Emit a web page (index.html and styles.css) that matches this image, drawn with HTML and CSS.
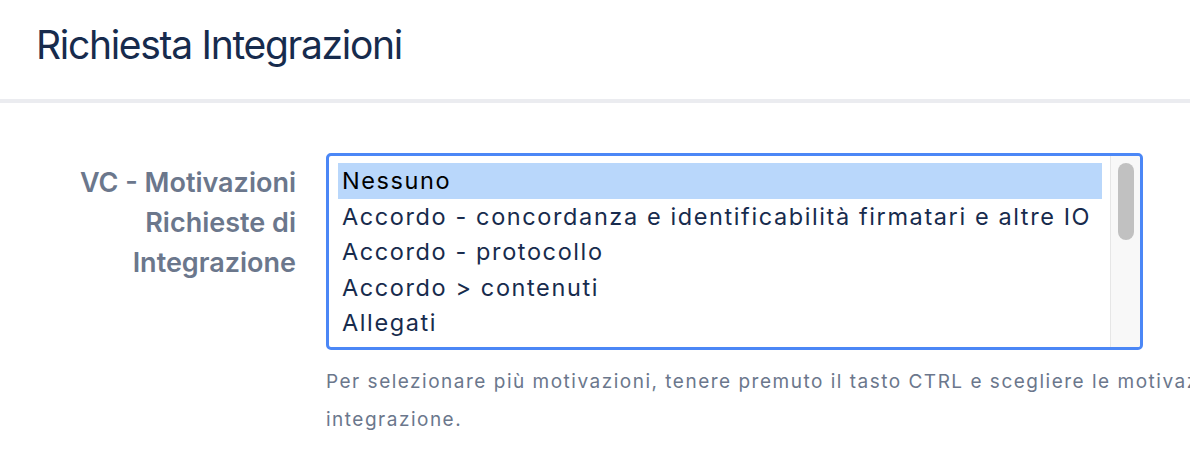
FILE: index.html
```html
<!DOCTYPE html>
<html lang="it">
<head>
<meta charset="utf-8">
<title>Richiesta Integrazioni</title>
<link rel="stylesheet" href="styles.css">
</head>
<body>
<div class="page">
  <header class="header">
    <h1 class="title">Richiesta Integrazioni</h1>
  </header>
  <div class="form">
    <div class="row">
      <label class="label">VC - Motivazioni Richieste di Integrazione</label>
      <div class="field">
        <div class="listbox" role="listbox" aria-multiselectable="true">
          <div class="options">
            <div class="option selected">Nessuno</div>
            <div class="option">Accordo - concordanza e identificabilità firmatari e altre IO</div>
            <div class="option">Accordo - protocollo</div>
            <div class="option">Accordo &gt; contenuti</div>
            <div class="option">Allegati</div>
            <div class="option">Anagrafica - dati di identificazione</div>
          </div>
          <div class="scrollbar"><div class="thumb"></div></div>
        </div>
        <p class="help">Per selezionare più motivazioni, tenere premuto il tasto CTRL e scegliere le motivazioni di integrazione.</p>
      </div>
    </div>
  </div>
</div>
</body>
</html>
```
FILE: styles.css
```css
html, body {
  margin: 0;
  padding: 0;
  background: #ffffff;
  overflow: hidden;
}
body {
  font-family: Inter, "Noto Sans", "Liberation Sans", sans-serif;
  width: 1190px;
  height: 454px;
}
.page {
  width: 1400px;
}
.header {
  height: 99px;
  border-bottom: 4px solid #ebecf0;
  padding-left: 36px;
  box-sizing: content-box;
}
.title {
  margin: 0;
  padding-top: 20px;
  font-size: 39px;
  line-height: 50px;
  font-weight: 400;
  letter-spacing: -1.3px;
  color: #172b4d;
}
.form {
  padding-top: 50px;
}
.row {
  display: flex;
  gap: 30px;
  align-items: flex-start;
}
.label {
  flex: none;
  width: 296px;
  box-sizing: border-box;
  padding-left: 40px;
  padding-top: 10px;
  text-align: right;
  font-size: 27px;
  line-height: 40px;
  font-weight: 600;
  color: #6b778c;
}
.field {
  flex: none;
  width: 1000px;
}
.listbox {
  width: 817px;
  height: 197px;
  box-sizing: border-box;
  border: 3px solid #4b87f6;
  border-radius: 5px;
  display: flex;
  overflow: hidden;
  background: #fff;
}
.options {
  flex: 1;
  padding: 7px 8px 0 9px;
  overflow: hidden;
}
.option {
  font-size: 23.5px;
  line-height: 35.3px;
  height: 35.3px;
  padding-left: 4px;
  letter-spacing: 1.6px;
  color: #172b4d;
  white-space: nowrap;
}
.option.selected {
  background: #b9d7fb;
  color: #000;
  height: 36px;
}
.scrollbar {
  flex: none;
  width: 30px;
  border-left: 1px solid #e6e6e6;
  background: #f8f8f8;
  padding: 7px 0 0 7px;
  box-sizing: border-box;
}
.thumb {
  width: 16px;
  height: 77px;
  border-radius: 8px;
  background: #c1c1c1;
}
.help {
  margin: 13px 0 0;
  font-size: 19px;
  line-height: 38px;
  letter-spacing: 1.5px;
  color: #6b778c;
}
```
